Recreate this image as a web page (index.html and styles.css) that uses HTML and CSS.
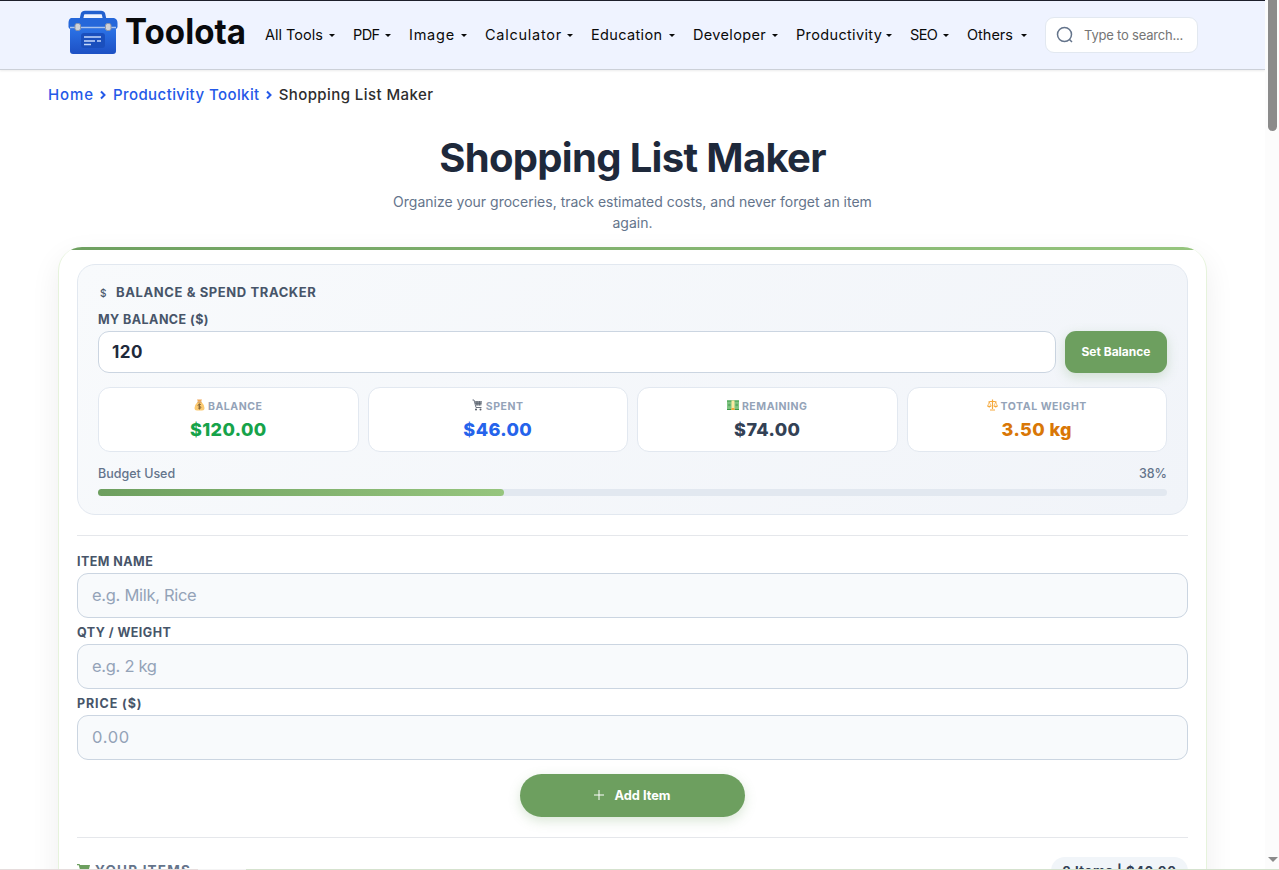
FILE: index.html
```html
<!DOCTYPE html>
<html lang="en">
<head>
  <meta charset="utf-8">
  <title>Shopping List Maker</title>
  <link rel="stylesheet" href="styles.css">
</head>
<body>

<div class="page">
  <header class="header">
    <a class="logo">
      <svg width="184" height="48" viewBox="0 0 184 48">
        <defs>
          <linearGradient id="box" x1="0" y1="0" x2="0" y2="1">
            <stop offset="0" stop-color="#2c74e8"/>
            <stop offset="1" stop-color="#1d50c4"/>
          </linearGradient>
        </defs>
        <path d="M13 12 L14.500 5 Q15 3.500 17 3.500 H33 Q35 3.500 35.500 5 L37 12" fill="none" stroke="#2260cf" stroke-width="3.500"/>
        <rect x="2" y="18" width="46" height="27" rx="3" fill="url(#box)"/>
        <path d="M3 9 H46 Q49.500 10 49.500 14 V18 Q49.500 20 47 20 H3 Q0.500 20 0.500 18 V14 Q0.500 10 3 9Z" fill="#2567da"/>
        <path d="M2 18.500 H48" stroke="#a9c3ee" stroke-width="1.300"/>
        <rect x="7" y="14.500" width="5.500" height="7" rx="2" fill="#d0d2d8" stroke="#8d95a8"/>
        <rect x="37.500" y="14.500" width="5.500" height="7" rx="2" fill="#d0d2d8" stroke="#8d95a8"/>
        <rect x="13" y="24" width="24" height="15" rx="3" fill="#1a4fbd"/>
        <path d="M16 28 H33 M16 32 H27 M29 32 H33 M16 35.500 H23" stroke="#c5d9fb" stroke-width="1.300"/>
        <text class="logo-text" x="57" y="35" textLength="121" lengthAdjust="spacingAndGlyphs">Toolota</text>
      </svg>
    </a>
    <nav class="nav">
      <a>All Tools<i class="caret"></i></a>
      <a class="tight">PDF<i class="caret"></i></a>
      <a class="wide">Image<i class="caret"></i></a>
      <a class="wide">Calculator<i class="caret"></i></a>
      <a class="loose">Education<i class="caret"></i></a>
      <a class="loose">Developer<i class="caret"></i></a>
      <a class="loose">Productivity<i class="caret"></i></a>
      <a class="tight">SEO<i class="caret"></i></a>
      <a>Others<i class="caret"></i></a>
    </nav>
    <div class="search">
      <svg width="18" height="18" viewBox="0 0 18 18" fill="none" stroke="#64748b" stroke-width="1.500">
        <circle cx="8.500" cy="8.500" r="7"/>
        <path d="M13.500 13.500 L16 16"/>
      </svg>
      <span>Type to search...</span>
    </div>
  </header>

  <div class="breadcrumb">
    <a class="crumb-home">Home</a>
    <svg class="chevron" width="8" height="10" viewBox="0 0 8 10"><path d="M2 1.500 L5.500 5 L2 8.500"/></svg>
    <a class="crumb-kit">Productivity Toolkit</a>
    <svg class="chevron" width="8" height="10" viewBox="0 0 8 10"><path d="M2 1.500 L5.500 5 L2 8.500"/></svg>
    <span>Shopping List Maker</span>
  </div>

  <h1 class="title">Shopping List Maker</h1>
  <p class="subtitle">Organize your groceries, track estimated costs, and never forget an item<br>again.</p>

  <main class="card">
    <section class="tracker">
      <h2 class="tracker-title"><span class="dollar">$</span>BALANCE &amp; SPEND TRACKER</h2>
      <label class="label">MY BALANCE ($)</label>
      <div class="balance-row">
        <div class="input balance-input">120</div>
        <button class="btn set-btn">Set Balance</button>
      </div>

      <div class="stats">
        <div class="stat">
          <div class="stat-name">
            <svg width="11" height="12" viewBox="0 0 11 12">
              <path d="M3.500 3 Q0.500 6 0.500 9 Q0.500 11.500 3 11.500 H8 Q10.500 11.500 10.500 9 Q10.500 6 7.500 3Z" fill="#fbc971"/>
              <path d="M3 0.500 H8 L7 2.500 H4Z" fill="#f0a85a"/>
              <path d="M3.500 3 H7.500" stroke="#c98b4b"/>
              <path d="M7 5.500 Q4 4.500 4 6.300 Q4 7.300 5.500 7.400 Q7.200 7.600 7 8.700 Q6.500 9.900 4 9 M5.500 4.500 V10.500" fill="none" stroke="#80643b" stroke-width=".9"/>
            </svg>BALANCE
          </div>
          <div class="stat-value green">$120.00</div>
        </div>
        <div class="stat">
          <div class="stat-name">
            <svg width="11" height="12" viewBox="0 0 11 12">
              <path d="M0.500 1 H2 L4 8.500 H9.500" fill="none" stroke="#6b7280"/>
              <path d="M2.500 2 H10 L9.300 6.500 H3.700Z" fill="#8a9099"/>
              <path d="M5 2 V6.500 M7.500 2 V6.500 M3 4.300 H9.500" stroke="#59616d" stroke-width=".7"/>
              <circle cx="4" cy="10.500" r="1" fill="#555b66"/><circle cx="8.500" cy="10.500" r="1" fill="#555b66"/>
            </svg>SPENT
          </div>
          <div class="stat-value blue">$46.00</div>
        </div>
        <div class="stat">
          <div class="stat-name">
            <svg width="12" height="12" viewBox="0 0 12 12">
              <rect x="0" y="1.500" width="12" height="9.500" fill="#7fc481"/>
              <path d="M0 2 H12 M0 10.500 H12" stroke="#3d9a49"/>
              <circle cx="2.300" cy="6" r="1.300" fill="#5cab62"/><circle cx="9.700" cy="6" r="1.300" fill="#5cab62"/>
              <rect x="4.500" y="1.500" width="3" height="9.500" fill="#fbe9a1"/>
              <rect x="4.500" y="9" width="3" height="2" fill="#f4a63d"/>
            </svg>REMAINING
          </div>
          <div class="stat-value dark">$74.00</div>
        </div>
        <div class="stat">
          <div class="stat-name">
            <svg width="11" height="12" viewBox="0 0 11 12" fill="none" stroke="#f5a83a">
              <path d="M5.500 0.500 V10 M1.500 3 Q5.500 1.500 9.500 3 M3 11 H8" stroke-width="1.200"/>
              <path d="M2.300 3 L0.700 7 M2.300 3 L4 7 M8.700 3 L7 7 M8.700 3 L10.300 7" stroke-width=".7"/>
              <path d="M0.300 7 H4.300 Q2.300 9.500 0.300 7Z M6.700 7 H10.700 Q8.700 9.500 6.700 7Z" fill="#f5a83a" stroke-width=".5"/>
            </svg>TOTAL WEIGHT
          </div>
          <div class="stat-value orange">3.50 kg</div>
        </div>
      </div>

      <div class="budget-row"><span>Budget Used</span><span>38%</span></div>
      <div class="bar"><div class="bar-fill" style="width: 38%"></div></div>
    </section>

    <section class="form">
      <label class="label">ITEM NAME</label>
      <div class="input placeholder">e.g. Milk, Rice</div>
      <label class="label">QTY / WEIGHT</label>
      <div class="input placeholder">e.g. 2 kg</div>
      <label class="label price-label">PRICE ($)</label>
      <div class="input placeholder price">0.00</div>
      <button class="btn add-btn">
        <svg width="10" height="10" viewBox="0 0 10 10"><path d="M5 0 V10 M0 5 H10" stroke="#fff"/></svg>Add Item
      </button>
    </section>

    <section class="items">
      <h2 class="items-title">
        <svg width="13" height="13" viewBox="0 0 13 13" fill="#6d9f5f"><path d="M0 0 H2.500 L3 1 H13 L11.500 7 H4.500 L5 8.500 H11.500 V9.500 H4 L1.800 1.200 H0Z"/><circle cx="5.500" cy="11.500" r="1.300"/><circle cx="10.500" cy="11.500" r="1.300"/></svg>YOUR ITEMS
      </h2>
      <span class="pill">2 Items | $46.00</span>
    </section>
  </main>
</div>

<div class="scrollbar">
  <div class="thumb"></div>
  <div class="arrow"></div>
</div>
<div class="bottom-line"></div>

</body>
</html>
```
FILE: styles.css
```css
* {
  box-sizing: border-box;
}

body {
  margin: 0;
  height: 870px;
  overflow: hidden;
  display: flex;
  background: #fff;
  font-family: Inter, "Liberation Sans", sans-serif;
}

.page {
  width: 1265px;
  height: 870px;
  overflow: hidden;
  background: #fff;
}

/* Header */
.header {
  height: 70px;
  display: flex;
  align-items: flex-start;
  padding-left: 68px;
  background: #eff3ff;
  border-top: 1px solid #1d1f2b;
  border-bottom: 1px solid #ccd0d8;
  box-shadow: 0 1px 2px rgba(0, 0, 0, .08);
}

.logo {
  width: 197px;
  padding-top: 8px;
}

.logo svg {
  display: block;
}

.logo-text {
  font: 700 35px Inter, sans-serif;
  fill: #090a0d;
}

.nav {
  width: 780px;
  display: grid;
  grid-template-columns: 88px 56px 76px 106px 102px 103px 114px 57px 78px;
  padding-top: 22px;
  font-size: 14.5px;
  line-height: 24px;
  color: #0a0a0a;
}

.nav a {
  display: flex;
  justify-content: space-between;
  align-items: center;
  padding-right: 18px;
  white-space: nowrap;
}

.nav .tight { letter-spacing: -.6px; }
.nav .loose { letter-spacing: .35px; }
.nav .wide { letter-spacing: .75px; }

.caret {
  border: 3px solid transparent;
  border-top-color: #0a0a0a;
  border-bottom: 0;
}

.search {
  width: 153px;
  height: 36px;
  margin-top: 16px;
  padding: 0 0 1px 10px;
  display: flex;
  align-items: center;
  gap: 10px;
  background: #fff;
  border: 1px solid #e2e8f0;
  border-radius: 9px;
  color: #757575;
  font-size: 13px;
  letter-spacing: -.2px;
  white-space: nowrap;
}

/* Breadcrumb */
.breadcrumb {
  height: 50px;
  padding: 0 0 2px 48px;
  display: flex;
  align-items: center;
  font-size: 15px;
  font-weight: 500;
  letter-spacing: .42px;
  color: #2d2d2d;
}

.breadcrumb a {
  color: #2459e8;
}

.breadcrumb .crumb-home {
  letter-spacing: .9px;
}

.chevron {
  margin: 1px 6px 0 5px;
  fill: none;
  stroke: #2459e8;
  stroke-width: 2;
}

.title {
  margin: 12px 0 0;
  height: 52px;
  line-height: 52px;
  text-align: center;
  font-size: 40px;
  font-weight: 700;
  letter-spacing: -.67px;
  color: #1e293b;
}

.subtitle {
  margin: 7px 0 14px;
  text-align: center;
  font-size: 14px;
  line-height: 21px;
  color: #64748b;
}

/* Main card */
.card {
  position: relative;
  height: 900px;
  margin: 0 58px;
  padding: 17px 18px;
  overflow: hidden;
  background: #fff;
  border: 1px solid #e6f3dc;
  border-top: 0;
  border-radius: 24px;
  box-shadow: 0 10px 30px rgba(0, 0, 0, .07);
}

.card::before {
  content: "";
  position: absolute;
  top: 0;
  left: 0;
  right: 0;
  height: 3px;
  background: linear-gradient(90deg, #6d9f5f, #96c57e);
}

.tracker {
  height: 251px;
  padding: 18px 20px;
  border: 1px solid #e2e8f0;
  border-radius: 18px;
  background: linear-gradient(135deg, #f8fafc, #f1f4f9);
}

.tracker-title {
  margin: 0;
  height: 18px;
  line-height: 18px;
  font-size: 13px;
  letter-spacing: .6px;
  color: #475569;
}

.dollar {
  display: inline-block;
  width: 18px;
  padding-left: 2px;
  font-size: 10px;
  font-weight: 500;
}

.label {
  display: block;
  height: 18px;
  line-height: 18px;
  font-size: 12.5px;
  font-weight: 700;
  letter-spacing: .45px;
  color: #475569;
}

.tracker .label {
  margin: 10px 0 2px;
}

.input {
  border: 1px solid #cbd5e1;
  border-radius: 11px;
  padding-left: 13px;
}

.balance-row {
  display: flex;
  gap: 9px;
}

.balance-input {
  flex: 1;
  height: 42px;
  line-height: 40px;
  background: #fff;
  font-size: 17px;
  font-weight: 700;
  letter-spacing: .5px;
  color: #1e293b;
}

.btn {
  border: 0;
  background: #6d9f5f;
  color: #fff;
  font-family: inherit;
  font-weight: 700;
  box-shadow: 0 4px 12px rgba(109, 159, 95, .25);
}

.set-btn {
  width: 102px;
  height: 42px;
  padding: 0 0 1px;
  border-radius: 11px;
  font-size: 12px;
}

.stats {
  display: grid;
  grid-template-columns: repeat(4, 1fr);
  gap: 9px;
  margin-top: 14px;
}

.stat {
  height: 65px;
  padding-top: 11px;
  text-align: center;
  background: #fff;
  border: 1px solid #e2e8f0;
  border-radius: 12px;
}

.stat-name {
  display: flex;
  justify-content: center;
  gap: 3px;
  height: 15px;
  line-height: 15px;
  font-size: 10.5px;
  font-weight: 700;
  letter-spacing: .55px;
  color: #94a3b8;
}

.stat-value {
  margin-top: 3px;
  line-height: 26px;
  font-size: 18px;
  font-weight: 800;
  letter-spacing: .4px;
}

.green { color: #16a34a; }
.blue { color: #2563eb; }
.dark { color: #334155; }
.orange { color: #d97706; }

.budget-row {
  display: flex;
  justify-content: space-between;
  margin-top: 13px;
  line-height: 18px;
  font-size: 12.5px;
  font-weight: 500;
  color: #64748b;
}

.bar {
  height: 7px;
  margin-top: 6px;
  border-radius: 4px;
  background: #e2e8f0;
}

.bar-fill {
  height: 7px;
  border-radius: 4px;
  background: linear-gradient(90deg, #6d9f5f, #96c57e);
}

/* Add item form */
.form {
  margin-top: 20px;
  padding: 17px 0 20px;
  border-top: 1px solid #e5e7eb;
  border-bottom: 1px solid #e5e7eb;
}

.form .label {
  margin-bottom: 2px;
}

.form .price-label {
  letter-spacing: .9px;
}

.placeholder {
  height: 45px;
  margin-bottom: 6px;
  padding-left: 14px;
  line-height: 43px;
  background: #f8fafc;
  font-size: 16.5px;
  letter-spacing: -.3px;
  color: #94a3b8;
}

.placeholder.price {
  letter-spacing: .7px;
}

.add-btn {
  display: flex;
  align-items: center;
  justify-content: center;
  gap: 10px;
  width: 225px;
  height: 43px;
  margin: 14px auto 0;
  padding-bottom: 2px;
  border-radius: 22px;
  font-size: 12.8px;
}

.items {
  display: flex;
  justify-content: space-between;
  padding-top: 19px;
}

.items-title {
  display: flex;
  gap: 5px;
  margin: 5px 0 0;
  line-height: 16px;
  font-size: 13.5px;
  letter-spacing: 1.2px;
  color: #64748b;
}

.items-title svg {
  margin-top: 2px;
}

.pill {
  width: 137px;
  height: 28px;
  line-height: 28px;
  text-align: center;
  border-radius: 14px;
  background: #f1f5f9;
  font-size: 13px;
  font-weight: 700;
  letter-spacing: .6px;
  color: #334155;
}

/* Scrollbar */
.scrollbar {
  display: flex;
  flex-direction: column;
  justify-content: space-between;
  align-items: center;
  width: 14px;
  padding: 0 0 8px 1px;
  background: #fcfcfc;
}

.thumb {
  width: 9px;
  height: 131px;
  border-radius: 0 0 5px 5px;
  background: #8b8b8b;
}

.arrow {
  border: 5px solid transparent;
  border-top-color: #8b8b8b;
  border-bottom: 0;
}

.bottom-line {
  position: fixed;
  left: 0;
  right: 0;
  bottom: 0;
  height: 1px;
  background: linear-gradient(90deg, #e6dcdc 198px, #f4f4f4 198px, #f4f4f4 246px, #d5e2ce 246px);
}
```
